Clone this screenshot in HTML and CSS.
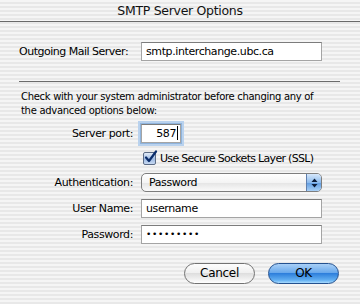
FILE: index.html
```html
<!DOCTYPE html>
<html lang="en">
<head>
  <meta charset="UTF-8">
  <title>SMTP Server Options</title>
  <link rel="stylesheet" href="styles.css">
</head>
<body>
  <div class="sheet">
    <div class="titlebar">SMTP Server Options</div>

    <div class="row row-server">
      <label class="label-free">Outgoing Mail Server:</label>
      <div class="field wide">smtp.interchange.ubc.ca</div>
    </div>

    <div class="separator"></div>

    <p class="notice">Check with your system administrator before changing any of the advanced options below:</p>

    <div class="row row-port">
      <label class="label">Server port:</label>
      <div class="field port">587<span class="caret"></span></div>
    </div>

    <div class="row row-ssl">
      <span class="label"></span>
      <span class="checkbox">
        <svg width="15" height="15" viewBox="0 0 15 15">
          <path d="M3 7.5 L6 11 L13 1.5" fill="none" stroke="#0b2d6b" stroke-width="2.2" stroke-linecap="round" stroke-linejoin="round"/>
        </svg>
      </span>
      <span class="check-text">Use Secure Sockets Layer (SSL)</span>
    </div>

    <div class="row row-auth">
      <label class="label">Authentication:</label>
      <div class="popup">
        <span class="popup-text">Password</span>
        <span class="popup-cap">
          <svg width="7" height="10" viewBox="0 0 7 10">
            <path d="M3.5 0.5 L6.5 4 L0.5 4 Z M0.5 6 L6.5 6 L3.5 9.5 Z" fill="#0d1d3a"/>
          </svg>
        </span>
      </div>
    </div>

    <div class="row row-user">
      <label class="label">User Name:</label>
      <div class="field wide">username</div>
    </div>

    <div class="row row-pass">
      <label class="label">Password:</label>
      <div class="field wide dots">•••••••••</div>
    </div>

    <div class="buttons">
      <button class="btn cancel">Cancel</button>
      <button class="btn ok">OK</button>
    </div>
  </div>
</body>
</html>
```

FILE: styles.css
```css
* {
  box-sizing: border-box;
}

body {
  margin: 0;
  width: 360px;
  height: 304px;
  overflow: hidden;
  font-family: "DejaVu Sans", sans-serif;
  font-size: 11px;
  letter-spacing: -0.4px;
  color: #000;
  background: repeating-linear-gradient(to bottom, #f5f5f5 0 2px, #e8e8e8 2px 4px);
}

.sheet {
  width: 360px;
  height: 304px;
  border-radius: 6px 6px 0 0;
}

.titlebar {
  height: 22px;
  border-bottom: 1px solid #6a6a6a;
  text-align: center;
  font-size: 12.5px;
  letter-spacing: -0.3px;
  line-height: 21px;
  color: #111;
}

.row {
  display: flex;
  align-items: center;
  gap: 8px;
  padding-left: 19px;
}

.label,
.label-free {
  width: 114px;
  text-align: right;
  white-space: nowrap;
}

.label-free {
  text-align: left;
  letter-spacing: -0.5px;
}

.field {
  height: 19px;
  background: #fff;
  border: 1px solid #a4a4a4;
  border-top-color: #7c7c7c;
  padding: 0 4px;
  line-height: 17px;
  white-space: nowrap;
}

.wide {
  width: 181px;
}

.row-server {
  margin-top: 20px;
}

.separator {
  margin: 20px 20px 0 19px;
  height: 1px;
  background: #6c6c6c;
}

.notice {
  width: 298px;
  margin: 8px 0 0 21px;
  font-size: 10px;
  letter-spacing: -0.3px;
  line-height: 14px;
}

.row-port {
  margin-top: 6px;
}

.port {
  width: 40px;
  text-align: right;
  padding-right: 2px;
  box-shadow: 0 0 0 1px #8fb4dd, 0 0 0 3px #b9d2ee;
}

.caret {
  display: inline-block;
  width: 1px;
  height: 14px;
  background: #000;
  vertical-align: -3px;
  margin-left: 1px;
}

.row-ssl {
  margin-top: 9px;
  gap: 0;
}

.row-ssl .label {
  width: 124px;
}

.checkbox {
  position: relative;
  width: 13px;
  height: 13px;
  border: 1px solid #5c6c86;
  border-radius: 2px;
  background: linear-gradient(#e3ecf8, #9fbbe3 55%, #c7d9f2);
}

.checkbox svg {
  position: absolute;
  left: -1px;
  top: -3px;
}

.check-text {
  margin-left: 4px;
  letter-spacing: -0.7px;
}

.row-auth {
  margin-top: 8px;
}

.popup {
  width: 181px;
  height: 19px;
  display: flex;
  border: 1px solid #7e7e7e;
  border-radius: 5px;
  background: linear-gradient(#ffffff, #f4f4f4 50%, #e4e4e4 51%, #fafafa);
  overflow: hidden;
}

.popup-text {
  flex: 1;
  padding-left: 7px;
  line-height: 17px;
}

.popup-cap {
  width: 15px;
  display: flex;
  align-items: center;
  justify-content: center;
  border-left: 1px solid #5f7fae;
  background: linear-gradient(#d7e8fb, #8dbbed 50%, #5f9be0 51%, #a8d0f6);
}

.row-user {
  margin-top: 7px;
}

.row-pass {
  margin-top: 7px;
}

.dots {
  font-size: 9px;
  letter-spacing: 0.7px;
}

.buttons {
  display: flex;
  justify-content: flex-end;
  gap: 13px;
  margin: 19px 21px 0 0;
}

.btn {
  width: 71px;
  height: 21px;
  border-radius: 11px;
  font-family: "DejaVu Sans", sans-serif;
  font-size: 12px;
  letter-spacing: -0.3px;
  padding: 0;
  line-height: 19px;
}

.cancel {
  border: 1px solid #727272;
  background: linear-gradient(#fdfdfd, #f0f0f0 45%, #dedede 50%, #f4f4f4 85%, #ffffff);
  color: #000;
}

.ok {
  border: 1px solid #24518f;
  background: linear-gradient(#a9d0f7, #6aa9ec 45%, #2e7fdc 50%, #63b0f2 85%, #a8dbff);
  color: #000;
}
```
